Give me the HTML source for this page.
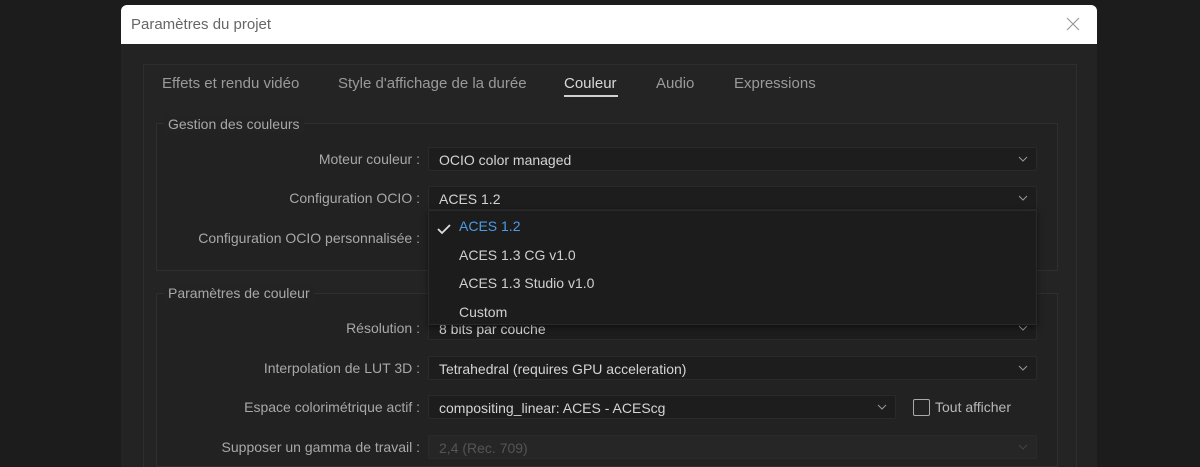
<!DOCTYPE html>
<html style="width:1200px;height:467px;overflow:hidden"><head><meta charset="utf-8"><style>
*{margin:0;padding:0;box-sizing:border-box}
body{width:1200px;height:467px;background:#1c1c1c;font-family:"Liberation Sans",sans-serif;font-size:14px;color:#b8b8b8;position:relative;overflow:hidden}
.dlg{position:absolute;left:121px;top:5px;width:976px;height:462px;background:#232323;border-radius:6px 6px 0 0;overflow:hidden}
.title{height:39px;background:#fff;color:#666;font-size:15px;padding:11px 0 0 10px;position:relative}
.x{position:absolute;right:14px;top:9px}
.panel{position:absolute;left:22px;top:59px;width:934px;height:420px;border:1px solid #2e2e2e;background:#242424}
.tab{position:absolute;top:75px;font-size:15px;color:#9a9a9a}
.grp{position:absolute;border:1px solid #2f2f2f;background:#222}
.gl{position:absolute;background:#232323;color:#a8a8a8;padding:0 4px;font-size:14px}
.lab{position:absolute;right:780px;text-align:right;color:#a8a8a8;white-space:nowrap}
.dd{position:absolute;left:428px;width:609px;height:24px;background:#1d1d1d;border:1px solid #2a2a2a;border-radius:2px;color:#d4d4d4;padding:4px 0 0 10px}
.dd svg{position:absolute;right:8px;top:8px}
.pop{position:absolute;left:428px;top:210px;width:609px;height:115px;background:#1c1c1c;border:1px solid #2a2a2a;box-shadow:0 2px 6px rgba(0,0,0,.5)}
.it{position:absolute;left:30px;color:#d0d0d0;font-size:14px}
</style></head><body>
<div class="dlg">
<div class="title">Paramètres du projet<svg class="x" width="20" height="20" viewBox="0 0 20 20"><path d="M4 4L16 16M16 4L4 16" stroke="#999" stroke-width="1.2"/></svg></div>
<div class="panel"></div>
</div>
<div class="tab" style="left:162px">Effets et rendu vidéo</div>
<div class="tab" style="left:338px">Style d'affichage de la durée</div>
<div class="tab" style="left:564px;color:#d8d8d8">Couleur</div>
<div style="position:absolute;left:564px;top:95px;width:54px;height:2px;background:#d0d0d0"></div>
<div class="tab" style="left:656px">Audio</div>
<div class="tab" style="left:734px">Expressions</div>

<div class="grp" style="left:156px;top:123px;width:902px;height:148px"></div>
<div class="gl" style="left:164px;top:116px">Gestion des couleurs</div>
<div class="grp" style="left:156px;top:293px;width:902px;height:174px"></div>
<div class="gl" style="left:164px;top:285px">Paramètres de couleur</div>

<div class="lab" style="top:151px">Moteur couleur :</div>
<div class="dd" style="top:147px">OCIO color managed<svg width="10" height="6"><path d="M1 1L5 5L9 1" stroke="#999" fill="none"/></svg></div>
<div class="lab" style="top:190px">Configuration OCIO :</div>
<div class="dd" style="top:186px">ACES 1.2<svg width="10" height="6"><path d="M1 1L5 5L9 1" stroke="#999" fill="none"/></svg></div>
<div class="lab" style="top:230px">Configuration OCIO personnalisée :</div>

<div class="lab" style="top:320px">Résolution :</div>
<div class="dd" style="top:316px">8 bits par couche<svg width="10" height="6"><path d="M1 1L5 5L9 1" stroke="#999" fill="none"/></svg></div>
<div class="pop">
<svg style="position:absolute;left:8px;top:12px" width="14" height="12"><path d="M1 6L5 10L13 2" stroke="#ddd" stroke-width="1.8" fill="none"/></svg>
<div class="it" style="top:7px;color:#4d9be6">ACES 1.2</div>
<div class="it" style="top:36px">ACES 1.3 CG v1.0</div>
<div class="it" style="top:64px">ACES 1.3 Studio v1.0</div>
<div class="it" style="top:93px">Custom</div>
</div>
<div class="lab" style="top:360px">Interpolation de LUT 3D :</div>
<div class="dd" style="top:356px">Tetrahedral (requires GPU acceleration)<svg width="10" height="6"><path d="M1 1L5 5L9 1" stroke="#999" fill="none"/></svg></div>
<div class="lab" style="top:399px">Espace colorimétrique actif :</div>
<div class="dd" style="top:395px;width:468px">compositing_linear: ACES - ACEScg<svg width="10" height="6"><path d="M1 1L5 5L9 1" stroke="#999" fill="none"/></svg></div>
<div style="position:absolute;left:913px;top:399px;width:17px;height:17px;border:1.5px solid #aaa;border-radius:2px"></div>
<div style="position:absolute;left:935px;top:399px;color:#b8b8b8">Tout afficher</div>
<div class="lab" style="top:439px">Supposer un gamma de travail :</div>
<div class="dd" style="top:435px;color:#555;background:#262626;border-color:#2a2a2a">2,4 (Rec. 709)<svg width="10" height="6"><path d="M1 1L5 5L9 1" stroke="#444" fill="none"/></svg></div>
</body></html>
